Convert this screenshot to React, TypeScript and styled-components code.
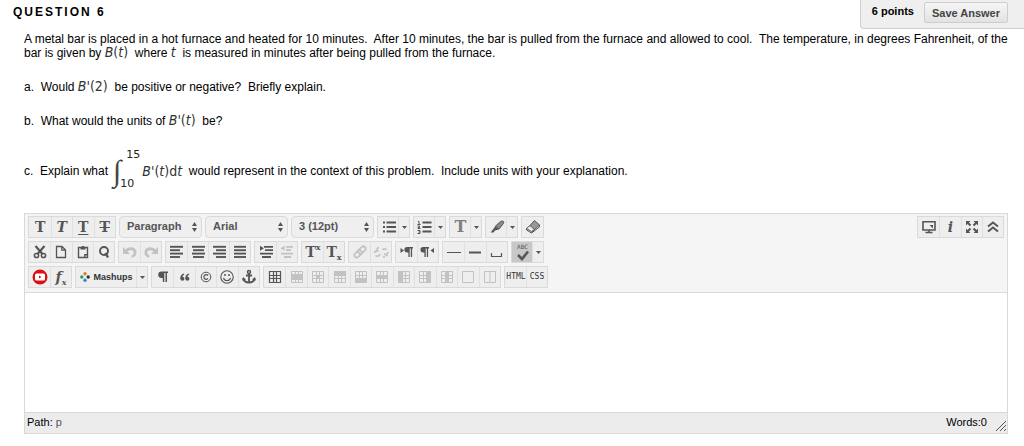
import React from "react";
import styled, { createGlobalStyle } from "styled-components";

const sans = `"Liberation Sans", Arial, Helvetica, sans-serif`;
const slab = `"DejaVu Serif", serif`;

const GlobalStyle = createGlobalStyle`
  * { box-sizing: border-box; }
  body { margin: 0; background: #fff; color: #000; font-family: ${sans}; font-size: 11px; line-height: 13px; }
`;

const Header = styled.header`
  display: flex;
  justify-content: space-between;
  align-items: flex-start;
  padding-left: 13px;
`;

const Title = styled.h1`
  margin: 0;
  padding-top: 4px;
  font-size: 12px;
  line-height: 16px;
  font-weight: bold;
  letter-spacing: 2px;
`;

const PointsPanel = styled.div`
  display: flex;
  align-items: center;
  gap: 10px;
  height: 29px;
  padding: 0 16px 5px 11px;
  background: #efefef;
  border: solid #cfcfcf;
  border-width: 0 0 1px 1px;
  border-bottom-left-radius: 4px;
  font-size: 11px;
  font-weight: bold;
`;

const SaveButton = styled.button`
  height: 21px;
  margin-top: 2px;
  padding: 0 7px;
  border: 1px solid #cdcdcd;
  border-radius: 2px;
  background: linear-gradient(#f6f6f6, #e2e2e2);
  color: #444;
  font: bold 11px/18px ${sans};
`;

const Question = styled.section`
  padding: 4px 16px 0 24px;
`;

const Para = styled.p`
  margin: 0 0 20px;
  font-size: 12px;
  white-space: pre-wrap;
`;

const IntegralPara = styled(Para)`
  display: flex;
  align-items: center;
  height: 50px;
  margin: -2px 0 17px;
`;

const Formula = styled.span`
  font-family: "DejaVu Sans Condensed", "DejaVu Sans", sans-serif;
  font-size: 14px;
  font-weight: 200;
  line-height: 13px;
  color: #333;
`;

const Integral = styled.span`
  display: flex;
  align-items: center;
  height: 50px;
  padding: 0 2px 0 5px;
  font-family: "DejaVu Sans", sans-serif;
  font-size: 11px;
  color: #222;
`;

const IntegralSign = styled.span`
  font-family: "Liberation Serif", serif;
  font-size: 30px;
  line-height: 34px;
  font-style: italic;
  color: #444;
`;

const Limits = styled.span`
  display: flex;
  flex-direction: column;
  justify-content: space-between;
  height: 46px;
  margin-left: -1px;
  padding-bottom: 4px;
  span:first-child { padding-left: 6px; }
`;

const Editor = styled.div`
  margin: 0 16px 0 24px;
  border: 1px solid #d9d9d9;
`;

const Toolbar = styled.div`
  display: flex;
  justify-content: space-between;
  align-items: flex-start;
  padding: 2px 3px 4px;
  background: #f5f5f5;
  border-bottom: 1px solid #d9d9d9;
`;

const ToolRows = styled.div`
  display: flex;
  flex-direction: column;
  gap: 3px;
`;

const ToolRow = styled.div`
  display: flex;
  gap: 3px;
`;

const Group = styled.div<{ $width: number }>`
  display: flex;
  width: ${(p) => p.$width}px;
  height: 22px;
  border: 1px solid #dadada;
  background: #eeeeee;
`;

const ToolButton = styled.button<{ $disabled?: boolean; $active?: boolean }>`
  display: flex;
  flex: 1 1 0;
  align-items: center;
  justify-content: center;
  min-width: 0;
  padding: 0;
  border: 0;
  border-left: 1px solid #e0e0e0;
  background: ${(p) => (p.$active ? "#c8c8c8" : "transparent")};
  color: ${(p) => (p.$disabled ? "#c2c2c2" : "#555")};
  font: bold 11px/16px ${sans};
  &:first-child { border-left-color: transparent; }
  svg { flex: none; display: block; }
`;

const ArrowButton = styled(ToolButton)`
  flex: 0 0 11px;
`;

const Letter = styled.span<{ $italic?: boolean; $line?: string; $size?: number; $light?: boolean }>`
  font-family: ${slab};
  font-size: ${(p) => p.$size ?? 14}px;
  line-height: 16px;
  font-weight: bold;
  font-style: ${(p) => (p.$italic ? "italic" : "normal")};
  color: ${(p) => (p.$light ? "#808080" : "inherit")};
  text-decoration: ${(p) => p.$line ?? "none"};
  text-decoration-thickness: 1px;
  text-underline-offset: 2px;
`;

const Script = styled.span<{ $low?: boolean }>`
  align-self: ${(p) => (p.$low ? "flex-end" : "flex-start")};
  font: bold 8px/10px ${slab};
`;

const CodeButton = styled(ToolButton)`
  font: 8px/12px "DejaVu Sans Mono", monospace;
  color: #333;
`;

const MashupsButton = styled(ToolButton)`
  gap: 3px;
  color: #333;
  font-size: 9px;
`;

const Spelling = styled.span`
  display: flex;
  flex-direction: column;
  align-items: center;
  font: 6px/6px "DejaVu Sans Mono", monospace;
`;

const SelectBox = styled.span`
  display: grid;
  align-items: center;
  width: 83px;
  height: 22px;
  border: 1px solid #dadada;
  border-radius: 4px;
  background: #efefef;
  color: #555;
  > * { grid-area: 1 / 1; }
  svg { justify-self: end; margin-right: 4px; pointer-events: none; }
`;

const Select = styled.select`
  appearance: none;
  width: 100%;
  height: 20px;
  padding: 0 14px 2px 7px;
  border: 0;
  background: transparent;
  color: #555;
  font: bold 11px/18px ${sans};
`;

const TextArea = styled.textarea`
  display: block;
  width: 100%;
  height: 119px;
  padding: 8px;
  border: 0;
  outline: 0;
  resize: none;
  background: #fff;
  font: 12px/16px ${sans};
`;

const StatusBar = styled.footer`
  display: flex;
  align-items: center;
  height: 21px;
  padding: 0 0 2px 2px;
  border-top: 1px solid #d9d9d9;
  background: #ececec;
  font-size: 11px;
  em { font-style: normal; color: #555; }
`;

const WordCount = styled.span`
  margin-left: auto;
  margin-right: 9px;
`;

const Grip = styled.svg`
  align-self: flex-end;
  margin-right: 1px;
`;

type IconProps = { children: React.ReactNode; fill?: boolean };
const Icon = ({ children, fill }: IconProps) => (
  <svg
    width={16}
    height={16}
    viewBox="0 0 16 16"
    fill={fill ? "currentColor" : "none"}
    stroke={fill ? "none" : "currentColor"}
    strokeWidth={1.5}
    aria-hidden="true"
  >
    {children}
  </svg>
);

const Tool = ({
  label,
  off,
  active,
  children,
}: {
  label: string;
  off?: boolean;
  active?: boolean;
  children: React.ReactNode;
}) => (
  <ToolButton type="button" aria-label={label} title={label} $disabled={off} $active={active}>
    {children}
  </ToolButton>
);

const Arrow = ({ label }: { label: string }) => (
  <ArrowButton type="button" aria-label={label}>
    <svg width="5" height="3" viewBox="0 0 5 3" fill="currentColor" aria-hidden="true">
      <path d="M0 0h5L2.5 3z" />
    </svg>
  </ArrowButton>
);

const Picker = ({ label, options }: { label: string; options: string[] }) => (
  <SelectBox>
    <Select aria-label={label}>
      {options.map((o) => (
        <option key={o}>{o}</option>
      ))}
    </Select>
    <svg width="5" height="10" viewBox="0 0 5 10" fill="currentColor" aria-hidden="true">
      <path d="M0 4h5L2.5 0zM0 6h5L2.5 10z" />
    </svg>
  </SelectBox>
);

/* Four text lines; each pair is the start and end of one line. */
const Lines = ({ rows }: { rows: [number, number][] }) => (
  <Icon>
    {rows.map(([a, b], i) => (
      <path key={i} d={`M${a} ${2.8 + i * 3.4}H${b}`} strokeWidth={1.9} />
    ))}
  </Icon>
);

/* A 3 by 3 table; `solid` lists the shaded areas as x, y, width, height. */
const Grid = ({ solid = [], off }: { solid?: number[][]; off?: boolean }) => (
  <Icon>
    <path
      d="M2.5 2.5h11v11h-11zM2.5 6.5h11M2.5 9.5h11M6.5 2.5v11M9.5 2.5v11"
      strokeWidth={off ? 1 : 1.2}
    />
    {solid.map(([x, y, w, h], i) => (
      <rect key={i} x={x} y={y} width={w} height={h} fill="currentColor" stroke="none" />
    ))}
  </Icon>
);

const Pilcrow = ({ x = 0 }: { x?: number }) => (
  <path transform={`translate(${x} 0)`} d="M5 3h6v1.6h-.9V13H8.8V4.6H7.7V13H6.4V8.6H5.4A2.8 2.8 0 0 1 5 3z" />
);

const returnArrow = "M1 3v7h7L5.700 7.700c2-2.200 5.800-1.700 6 .8.1 1.500-.8 2.500-2.200 3v2.300c3-.5 5.200-2.600 5-5.600C14.200 3 7.500 1.700 3.500 5.500z";

const tableTools: [string, number[][]][] = [
  ["Row properties", [[2, 5, 12, 6]]],
  ["Cell properties", [[6, 6, 4, 4]]],
  ["Insert row before", [[2, 2, 12, 5]]],
  ["Insert row after", [[2, 9, 12, 5]]],
  ["Delete row", [[2, 6, 12, 4]]],
  ["Insert column before", [[2, 2, 5, 12]]],
  ["Insert column after", [[9, 2, 5, 12]]],
  ["Delete column", [[6, 2, 4, 12]]],
];

const FormatRow = () => (
  <ToolRow>
    <Group $width={88}>
      <Tool label="Bold"><Letter>T</Letter></Tool>
      <Tool label="Italic"><Letter $italic>T</Letter></Tool>
      <Tool label="Underline"><Letter $line="underline">T</Letter></Tool>
      <Tool label="Strikethrough"><Letter $line="line-through">T</Letter></Tool>
    </Group>
    <Picker label="Format" options={["Paragraph", "Heading"]} />
    <Picker label="Font" options={["Arial", "Times"]} />
    <Picker label="Size" options={["3 (12pt)", "4 (14pt)"]} />
    <Group $width={33}>
      <Tool label="Bullet list">
        <Icon><path d="M2 3.500h2M2 8h2M2 12.500h2M5.500 3.500h9.500M5.500 8h9.500M5.500 12.500h9.500" strokeWidth={1.8} /></Icon>
      </Tool>
      <Arrow label="Bullet list styles" />
    </Group>
    <Group $width={33}>
      <Tool label="Numbered list">
        <Icon>
          <path d="M5.500 3.500h9M5.500 8h9M5.500 12.500h9" strokeWidth={1.8} />
          <path d="M1 2.500h1V5M.5 5.500h3M.5 7h2v1.500H1V9.500h2.500M.5 11.500H3v3H.5M1.500 13H3" strokeWidth={1} />
        </Icon>
      </Tool>
      <Arrow label="Numbered list styles" />
    </Group>
    <Group $width={33}>
      <Tool label="Text color"><Letter $size={16} $light>T</Letter></Tool>
      <Arrow label="Text colors" />
    </Group>
    <Group $width={33}>
      <Tool label="Highlight color">
        <Icon>
          <path d="M14.300 2.300c.8.8.4 2-.4 2.900L10 10 6.300 7.300l4.500-4.200c1.200-1 2.800-1.500 3.500-.8z" fill="#888" strokeWidth={1} />
          <path d="M6.300 7.300 10 10.500 6 11.500 4.500 13.500h-3L4 10.500z" fill="currentColor" stroke="none" />
        </Icon>
      </Tool>
      <Arrow label="Highlight colors" />
    </Group>
    <Group $width={23}>
      <Tool label="Remove formatting">
        <Icon>
          <path d="M9.500 1.500 14.500 6 9.500 10.500 5 6.500z" fill="#999" strokeWidth={1} />
          <path d="M5 6.500 1.500 9.500V11L6.500 14l3-3.500M14.500 6v2L6.500 14M1.500 9.500l5 3 3-2" strokeWidth={1} />
        </Icon>
      </Tool>
    </Group>
  </ToolRow>
);

const EditRow = () => (
  <ToolRow>
    <Group $width={87}>
      <Tool label="Cut">
        <Icon>
          <circle cx="4.500" cy="11.500" r="2.100" /><circle cx="11.500" cy="11.500" r="2.100" />
          <path d="M3.500 2 10.500 10M12.500 2 5.500 10" strokeWidth={2.200} />
        </Icon>
      </Tool>
      <Tool label="Copy">
        <Icon><path d="M3.500 2.500h5.500l3.500 3.500v7.500h-9zM8.800 2.500V6.200h3.700" strokeWidth={1.300} /></Icon>
      </Tool>
      <Tool label="Paste">
        <Icon>
          <path d="M3.500 3.500h9v10h-9zM9.800 13.500v-2.700h2.700" strokeWidth={1.400} />
          <path d="M5.500 5.500v-2h1.300V2h2.400v1.500h1.300v2z" fill="currentColor" stroke="none" />
        </Icon>
      </Tool>
      <Tool label="Find">
        <Icon><circle cx="8" cy="7" r="4" strokeWidth={1.900} /><path d="m9.500 9 2.500 4.500" strokeWidth={2.400} /></Icon>
      </Tool>
    </Group>
    <Group $width={44}>
      <Tool label="Undo" off>
        <Icon fill><path d={returnArrow} /></Icon>
      </Tool>
      <Tool label="Redo" off>
        <Icon fill><path transform="matrix(-1 0 0 1 16 0)" d={returnArrow} /></Icon>
      </Tool>
    </Group>
    <Group $width={86}>
      <Tool label="Align left"><Lines rows={[[1, 14], [1, 11], [1, 14], [1, 11]]} /></Tool>
      <Tool label="Align center"><Lines rows={[[2, 15], [3, 14], [2, 15], [3, 14]]} /></Tool>
      <Tool label="Align right"><Lines rows={[[2, 15], [5, 15], [2, 15], [5, 15]]} /></Tool>
      <Tool label="Justify"><Lines rows={[[2, 14], [2, 14], [2, 14], [2, 14]]} /></Tool>
    </Group>
    <Group $width={44}>
      <Tool label="Indent">
        <Icon><path d="M6 2.800h9M7 6.200h8M2 9.600h13M4 13h9" strokeWidth={1.800} /><path d="M2 1.800v5l4-2.500z" fill="currentColor" stroke="none" /></Icon>
      </Tool>
      <Tool label="Outdent" off>
        <Icon><path d="M7 2.800h7M7 6.200h5M2 9.600h12M5 13h7" strokeWidth={1.800} /><path d="M5.500 1.800v5l-4-2.500z" fill="currentColor" stroke="none" /></Icon>
      </Tool>
    </Group>
    <Group $width={44}>
      <Tool label="Superscript"><Letter>T</Letter><Script>x</Script></Tool>
      <Tool label="Subscript"><Letter>T</Letter><Script $low>x</Script></Tool>
    </Group>
    <Group $width={44}>
      <Tool label="Link" off>
        <Icon>
          <g transform="rotate(-45 8 8)" strokeWidth={1.700}>
            <rect x="1" y="5.700" width="8.500" height="4.600" rx="2.300" />
            <rect x="6.500" y="5.700" width="8.500" height="4.600" rx="2.300" />
          </g>
        </Icon>
      </Tool>
      <Tool label="Remove link" off>
        <Icon>
          <path d="M9.500 6c1-1.500 3-1.500 4 0M15 8c0 2-2 3-4 2M7 10c-.5 2-3 3-4.500 1.500M1.500 9c0-2 2-2.500 4-1.500M5 3v2M3 5l1.500 1M11 12v2M13 11l1.500 1" strokeWidth={1.700} />
        </Icon>
      </Tool>
    </Group>
    <Group $width={44}>
      <Tool label="Left to right"><Icon fill><path d="M1.500 4v5L5 6.500z" /><Pilcrow x={3} /></Icon></Tool>
      <Tool label="Right to left"><Icon fill><path d="M14 4v5l-3.500-2.500z" /><Pilcrow x={-2} /></Icon></Tool>
    </Group>
    <Group $width={66}>
      <Tool label="Thin rule"><Icon><path d="M1 8.500h14" strokeWidth={1} /></Icon></Tool>
      <Tool label="Thick rule"><Icon><path d="M2 8.500h12" strokeWidth={2} /></Icon></Tool>
      <Tool label="Non-breaking space"><Icon><path d="M2.500 9v3.500h10V9" strokeWidth={1.200} /></Icon></Tool>
    </Group>
    <Group $width={33}>
      <Tool label="Check spelling" active>
        <Spelling>
          ABC
          <svg width="14" height="11" viewBox="0 0 14 11" fill="none" stroke="currentColor" strokeWidth="2.600" aria-hidden="true">
            <path d="m2 5 4 4 6-7.500" />
          </svg>
        </Spelling>
      </Tool>
      <Arrow label="Spelling languages" />
    </Group>
  </ToolRow>
);

const InsertRow = () => (
  <ToolRow>
    <Group $width={44}>
      <Tool label="Record video">
        <svg width="16" height="16" viewBox="0 0 16 16" aria-hidden="true">
          <circle cx="8" cy="8" r="7.500" fill="#d90f14" />
          <rect x="3" y="4.500" width="10" height="7" rx="1.500" fill="#fff" />
          <path d="M7 6.500v3L9.500 8z" fill="#d90f14" />
        </svg>
      </Tool>
      <Tool label="Math editor"><Letter $italic>f</Letter><Script $low><i>x</i></Script></Tool>
    </Group>
    <Group $width={73}>
      <MashupsButton type="button">
        <svg width="10" height="10" viewBox="0 0 10 10" aria-hidden="true">
          <circle cx="5" cy="1.800" r="1.700" fill="#e07b26" />
          <circle cx="1.800" cy="5" r="1.700" fill="#2c9a6c" />
          <circle cx="8.200" cy="5" r="1.700" fill="#333" />
          <circle cx="5" cy="8.200" r="1.700" fill="#2f8fc4" />
        </svg>
        Mashups
      </MashupsButton>
      <Arrow label="Mashup types" />
    </Group>
    <Group $width={109}>
      <Tool label="Show blocks"><Icon fill><path d="M6.500 2.500H13v1.600h-1V13h-1.500V4.100H9.300V13H7.800V9H6.500a3.250 3.250 0 0 1 0-6.500z" /></Icon></Tool>
      <Tool label="Block quote">
        <Icon fill>
          <path d="M7 4.500C5 5 3.200 6.500 3.200 9.200c0 1.500 1 2.500 2.200 2.500s2-.8 2-2-.8-2-1.900-2c.1-1 .8-1.600 1.700-2zM12 4.500c-2 .5-3.800 2-3.800 4.700 0 1.500 1 2.500 2.200 2.500s2-.8 2-2-.8-2-1.900-2c.1-1 .8-1.600 1.700-2z" />
        </Icon>
      </Tool>
      <Tool label="Symbol">
        <Icon><circle cx="8" cy="8" r="4.800" strokeWidth={1} /><path d="M10 6.600a2.300 2.300 0 1 0 0 2.800" strokeWidth={1.200} /></Icon>
      </Tool>
      <Tool label="Emoticon">
        <Icon>
          <circle cx="8" cy="8" r="6.200" strokeWidth={1.100} /><path d="M4.500 9c1 3.500 6 3.500 7 0" strokeWidth={1.200} />
          <circle cx="6" cy="6" r="1" fill="currentColor" stroke="none" /><circle cx="10" cy="6" r="1" fill="currentColor" stroke="none" />
        </Icon>
      </Tool>
      <Tool label="Anchor">
        <Icon>
          <circle cx="8" cy="3" r="1.500" /><path d="M8 4.500V13.500M5 6.500h6" strokeWidth={1.800} />
          <path d="M2.500 9.500c.5 3 3 4 5.500 4s5-1 5.500-4" strokeWidth={1.900} />
          <path d="M1 11.500 2 8l3 2.500zM15 11.500 14 8l-3 2.500z" fill="currentColor" stroke="none" />
        </Icon>
      </Tool>
    </Group>
    <Group $width={238}>
      <Tool label="Insert table"><Grid /></Tool>
      {tableTools.map(([label, solid]) => (
        <Tool key={label} label={label} off><Grid solid={solid} off /></Tool>
      ))}
      <Tool label="Merge cells" off><Icon><path d="M2.500 2.500h11v11h-11z" strokeWidth={1} /></Icon></Tool>
      <Tool label="Split cells" off><Icon><path d="M2.500 2.500h11v11h-11zM8 2.500v11" strokeWidth={1} /></Icon></Tool>
    </Group>
    <Group $width={44}>
      <CodeButton type="button">HTML</CodeButton>
      <CodeButton type="button">CSS</CodeButton>
    </Group>
  </ToolRow>
);

const WindowTools = () => (
  <Group $width={87}>
    <Tool label="Preview">
      <Icon><path d="M2 2.700h12v8.300H2zM8 11v2M4.500 13.500h7" strokeWidth={1.600} /><path d="M8.500 6h3.500v3.500z" fill="currentColor" stroke="none" /></Icon>
    </Tool>
    <Tool label="Help"><Letter $italic $size={14}>i</Letter></Tool>
    <Tool label="Full screen">
      <Icon>
        <path d="m3.500 3.500 3 3M12.500 3.500l-3 3M3.500 12.500l3-3M12.500 12.500l-3-3" strokeWidth={2} />
        <path d="M2 2h4.500L2 6.500zM14 2H9.500L14 6.500zM2 14h4.500L2 9.500zM14 14H9.500L14 9.500z" fill="currentColor" stroke="none" />
      </Icon>
    </Tool>
    <Tool label="Show fewer"><Icon><path d="m3 7.500 5-4 5 4M3 12.500l5-4 5 4" strokeWidth={2} /></Icon></Tool>
  </Group>
);

export default function App() {
  return (
    <>
      <GlobalStyle />
      <Header>
        <Title>QUESTION 6</Title>
        <PointsPanel>
          6 points
          <SaveButton type="button">Save Answer</SaveButton>
        </PointsPanel>
      </Header>
      <Question>
        <Para>
          A metal bar is placed in a hot furnace and heated for 10 minutes.{"  "}After 10 minutes, the bar is pulled
          {" "}from the furnace and allowed to cool.{"  "}The temperature, in degrees Fahrenheit, of the bar is given by{" "}
          <Formula><i>B</i>(<i>t</i>)</Formula>{"  "}where <Formula><i>t</i></Formula>{"  "}is measured in minutes after
          {" "}being pulled from the furnace.
        </Para>
        <Para>
          a.{"  "}Would <Formula><i>B</i>'(2)</Formula>{"  "}be positive or negative?{"  "}Briefly explain.
        </Para>
        <Para>
          b.{"  "}What would the units of <Formula><i>B</i>'(<i>t</i>)</Formula>{"  "}be?
        </Para>
        <IntegralPara as="div">
          <span>c.{"  "}Explain what</span>
          <Integral>
            <IntegralSign>∫</IntegralSign>
            <Limits><span>15</span><span>10</span></Limits>
          </Integral>
          <Formula><i>B</i>'(<i>t</i>)d<i>t</i></Formula>
          <span>{"  "}would represent in the context of this problem.{"  "}Include units with your explanation.</span>
        </IntegralPara>
      </Question>
      <Editor>
        <Toolbar role="toolbar" aria-label="Text editor">
          <ToolRows>
            <FormatRow />
            <EditRow />
            <InsertRow />
          </ToolRows>
          <WindowTools />
        </Toolbar>
        <TextArea aria-label="Answer" />
        <StatusBar>
          <span>Path: <em>p</em></span>
          <WordCount>Words:0</WordCount>
          <Grip width="10" height="10" viewBox="0 0 10 10" stroke="#555" aria-hidden="true">
            <path d="M0 10 10 0M4 10l6-6M8 10l2-2" />
          </Grip>
        </StatusBar>
      </Editor>
    </>
  );
}
